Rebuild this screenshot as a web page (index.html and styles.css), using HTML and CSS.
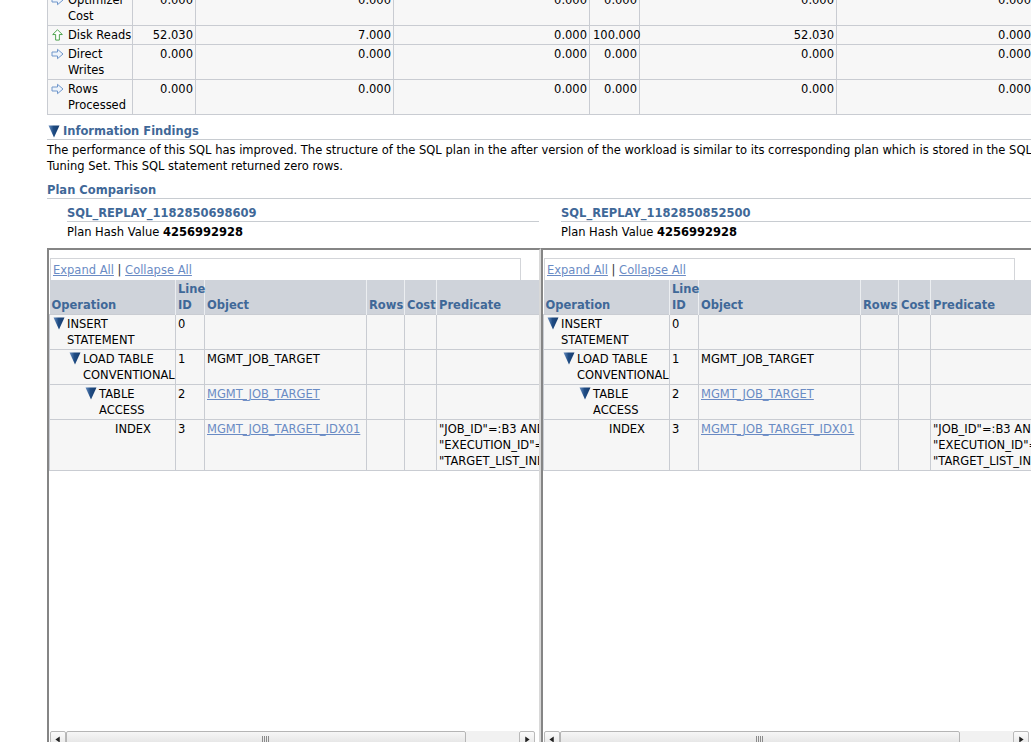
FILE: index.html
```html
<!DOCTYPE html>
<html lang="en">
    <head>
        <meta charset="UTF-8" />
        <title>SQL Performance Analyzer - Plan Comparison</title>
        <link rel="stylesheet" href="styles.css">
    </head>
    <body>
        <svg class="defs" width="0" height="0" aria-hidden="true">
            <defs>
                <linearGradient id="triFill" x1="0" y1="0" x2="1" y2="0">
                    <stop offset="0" stop-color="#6a8fc0" />
                    <stop offset="0.45" stop-color="#1f4c84" />
                    <stop offset="1" stop-color="#163b6c" />
                </linearGradient>
                <symbol id="tri" viewBox="0 0 12 13">
                    <path d="M0.5 0.5 H11.5 L6 12.5 Z" fill="url(#triFill)" />
                </symbol>
                <symbol id="arrowRight" viewBox="0 0 13 11">
                    <path d="M1 3.5 H6.5 V0.8 L12 5.5 L6.5 10.2 V7.5 H1 Z" fill="#eef4fb" stroke="#7097cb" stroke-width="1" />
                </symbol>
                <symbol id="arrowUp" viewBox="0 0 12 13">
                    <path d="M6 0.8 L11.2 6 H8 V12 H4 V6 H0.8 Z" fill="#fff" stroke="#3f9b3f" stroke-width="1" />
                </symbol>
            </defs>
        </svg>

        <div class="page">
            <table class="stats">
                <colgroup>
                    <col style="width: 85px" />
                    <col style="width: 63px" />
                    <col style="width: 198px" />
                    <col style="width: 196px" />
                    <col style="width: 50px" />
                    <col style="width: 197px" />
                    <col style="width: 197px" />
                </colgroup>
                <tr>
                    <td class="label"><div class="metric"><svg class="ico"><use href="#arrowRight" /></svg><span>Optimizer Cost</span></div></td>
                    <td class="num">0.000</td>
                    <td class="num">0.000</td>
                    <td class="num">0.000</td>
                    <td class="num">0.000</td>
                    <td class="num">0.000</td>
                    <td class="num">0.000</td>
                </tr>
                <tr>
                    <td class="label"><div class="metric"><svg class="ico"><use href="#arrowUp" /></svg><span class="nowrap">Disk Reads</span></div></td>
                    <td class="num">52.030</td>
                    <td class="num">7.000</td>
                    <td class="num">0.000</td>
                    <td class="num">100.000</td>
                    <td class="num">52.030</td>
                    <td class="num">0.000</td>
                </tr>
                <tr>
                    <td class="label"><div class="metric"><svg class="ico"><use href="#arrowRight" /></svg><span>Direct Writes</span></div></td>
                    <td class="num">0.000</td>
                    <td class="num">0.000</td>
                    <td class="num">0.000</td>
                    <td class="num">0.000</td>
                    <td class="num">0.000</td>
                    <td class="num">0.000</td>
                </tr>
                <tr>
                    <td class="label"><div class="metric"><svg class="ico"><use href="#arrowRight" /></svg><span>Rows Processed</span></div></td>
                    <td class="num">0.000</td>
                    <td class="num">0.000</td>
                    <td class="num">0.000</td>
                    <td class="num">0.000</td>
                    <td class="num">0.000</td>
                    <td class="num">0.000</td>
                </tr>
            </table>

            <h3 class="section"><svg class="tri"><use href="#tri" /></svg>Information Findings</h3>
            <p class="finding">
                The performance of this SQL has improved. The structure of the SQL plan in the after version of the workload is similar to its corresponding plan which is stored in the SQL Tuning Set. This SQL statement returned zero rows.
            </p>

            <h3 class="section">Plan Comparison</h3>

            <div class="plans">
                <div class="plan">
                    <div class="plan-head">
                        <div class="plan-title">SQL_REPLAY_1182850698609</div>
                        <div class="plan-hash">Plan Hash Value <b>4256992928</b></div>
                    </div>
                    <div class="plan-frame">
                        <div class="frame-body">
                            <div class="tree-tools"><a href="#">Expand All</a> | <a href="#">Collapse All</a></div>
                            <table class="plan-table">
                                <colgroup>
                                    <col style="width: 126px" />
                                    <col style="width: 29px" />
                                    <col style="width: 162px" />
                                    <col style="width: 38px" />
                                    <col style="width: 32px" />
                                    <col style="width: 170px" />
                                </colgroup>
                                <tr>
                                    <th>Operation</th>
                                    <th>Line ID</th>
                                    <th>Object</th>
                                    <th>Rows</th>
                                    <th>Cost</th>
                                    <th>Predicate</th>
                                </tr>
                                <tr>
                                    <td><div class="op lvl0"><svg class="tri"><use href="#tri" /></svg><span>INSERT STATEMENT</span></div></td>
                                    <td>0</td>
                                    <td></td>
                                    <td></td>
                                    <td></td>
                                    <td></td>
                                </tr>
                                <tr>
                                    <td><div class="op lvl1"><svg class="tri"><use href="#tri" /></svg><span>LOAD TABLE CONVENTIONAL</span></div></td>
                                    <td>1</td>
                                    <td>MGMT_JOB_TARGET</td>
                                    <td></td>
                                    <td></td>
                                    <td></td>
                                </tr>
                                <tr>
                                    <td><div class="op lvl2"><svg class="tri"><use href="#tri" /></svg><span>TABLE ACCESS</span></div></td>
                                    <td>2</td>
                                    <td><a href="#">MGMT_JOB_TARGET</a></td>
                                    <td></td>
                                    <td></td>
                                    <td></td>
                                </tr>
                                <tr>
                                    <td><div class="op lvl3"><span class="leaf"></span><span>INDEX</span></div></td>
                                    <td>3</td>
                                    <td><a href="#">MGMT_JOB_TARGET_IDX01</a></td>
                                    <td></td>
                                    <td></td>
                                    <td>"JOB_ID"=:B3 AND "EXECUTION_ID"=:B2 AND "TARGET_LIST_INDEX"=:B1</td>
                                </tr>
                            </table>
                        </div>
                        <div class="hscroll">
                            <span class="sb-btn"><svg viewBox="0 0 16 16"><path d="M5 8 L10 4.5 V11.5 Z" /></svg></span>
                            <span class="sb-thumb"><span class="grip"></span></span>
                            <span class="sb-track"></span>
                            <span class="sb-btn"><svg viewBox="0 0 16 16"><path d="M11 8 L6 4.5 V11.5 Z" /></svg></span>
                        </div>
                    </div>
                </div>

                <div class="plan">
                    <div class="plan-head">
                        <div class="plan-title">SQL_REPLAY_1182850852500</div>
                        <div class="plan-hash">Plan Hash Value <b>4256992928</b></div>
                    </div>
                    <div class="plan-frame">
                        <div class="frame-body">
                            <div class="tree-tools"><a href="#">Expand All</a> | <a href="#">Collapse All</a></div>
                            <table class="plan-table">
                                <colgroup>
                                    <col style="width: 126px" />
                                    <col style="width: 29px" />
                                    <col style="width: 162px" />
                                    <col style="width: 38px" />
                                    <col style="width: 32px" />
                                    <col style="width: 170px" />
                                </colgroup>
                                <tr>
                                    <th>Operation</th>
                                    <th>Line ID</th>
                                    <th>Object</th>
                                    <th>Rows</th>
                                    <th>Cost</th>
                                    <th>Predicate</th>
                                </tr>
                                <tr>
                                    <td><div class="op lvl0"><svg class="tri"><use href="#tri" /></svg><span>INSERT STATEMENT</span></div></td>
                                    <td>0</td>
                                    <td></td>
                                    <td></td>
                                    <td></td>
                                    <td></td>
                                </tr>
                                <tr>
                                    <td><div class="op lvl1"><svg class="tri"><use href="#tri" /></svg><span>LOAD TABLE CONVENTIONAL</span></div></td>
                                    <td>1</td>
                                    <td>MGMT_JOB_TARGET</td>
                                    <td></td>
                                    <td></td>
                                    <td></td>
                                </tr>
                                <tr>
                                    <td><div class="op lvl2"><svg class="tri"><use href="#tri" /></svg><span>TABLE ACCESS</span></div></td>
                                    <td>2</td>
                                    <td><a href="#">MGMT_JOB_TARGET</a></td>
                                    <td></td>
                                    <td></td>
                                    <td></td>
                                </tr>
                                <tr>
                                    <td><div class="op lvl3"><span class="leaf"></span><span>INDEX</span></div></td>
                                    <td>3</td>
                                    <td><a href="#">MGMT_JOB_TARGET_IDX01</a></td>
                                    <td></td>
                                    <td></td>
                                    <td>"JOB_ID"=:B3 AND "EXECUTION_ID"=:B2 AND "TARGET_LIST_INDEX"=:B1</td>
                                </tr>
                            </table>
                        </div>
                        <div class="hscroll">
                            <span class="sb-btn"><svg viewBox="0 0 16 16"><path d="M5 8 L10 4.5 V11.5 Z" /></svg></span>
                            <span class="sb-thumb"><span class="grip"></span></span>
                            <span class="sb-track"></span>
                            <span class="sb-btn"><svg viewBox="0 0 16 16"><path d="M11 8 L6 4.5 V11.5 Z" /></svg></span>
                        </div>
                    </div>
                </div>
            </div>
        </div>
    </body>
</html>
```

FILE: styles.css
```css
body {
    margin: 0;
    font-family: "DejaVu Sans", sans-serif;
    font-size: 11.5px;
    line-height: 16px;
    color: #000;
    background: #fff;
    overflow: hidden;
}
.defs {
    position: absolute;
    width: 0;
    height: 0;
}
.page {
    padding-left: 47px;
    width: 1000px;
}
a {
    color: #6a8bc4;
}
.nowrap {
    white-space: nowrap;
}

/* statistics table */
.stats {
    border-collapse: collapse;
    table-layout: fixed;
    width: 986px;
    margin-top: -10px;
}
.stats td {
    background: #f7f7f7;
    border: 1px solid #c9ccd2;
    padding: 1px 2px 1px 3px;
    vertical-align: top;
}
.stats .label {
    padding-right: 0;
}
.stats .num {
    text-align: right;
}
.metric {
    display: flex;
    align-items: flex-start;
}
.metric .ico {
    flex: none;
    width: 13px;
    height: 12px;
    margin: 2px 4px 0 0;
}

/* section headers */
.section {
    display: flex;
    align-items: center;
    margin: 8px 0 0;
    font-size: 11.5px;
    font-weight: bold;
    line-height: 16px;
    color: #3f6898;
    border-bottom: 1px solid #c8ccd1;
}
.section .tri {
    width: 12px;
    height: 13px;
    margin: 0 3px 0 1px;
}
.finding {
    margin: 2px 0 6px;
    width: 1000px;
}

/* plan comparison */
.plans {
    display: grid;
    grid-template-columns: 494px 494px;
}
.plan-head {
    padding: 0 2px 0 20px;
}
.plan-title {
    margin-top: 7px;
    font-weight: bold;
    line-height: 15px;
    color: #3f6898;
    border-bottom: 1px solid #c8ccd1;
}
.plan-hash {
    padding-top: 2px;
}
.plan-frame {
    margin-top: 8px;
    border-top: 2px solid #858585;
    border-left: 2px solid #858585;
    border-right: 2px solid #d8d8d8;
}
.frame-body {
    height: 481px;
    overflow: hidden;
    padding: 8px 0 0 0;
    box-sizing: border-box;
    background: #fff;
}
.tree-tools {
    width: 467px;
    height: 21px;
    line-height: 22px;
    margin-left: 1px;
    padding-left: 2px;
    border: 1px solid #d3d5d9;
    border-bottom: none;
    color: #333;
}
.plan-table {
    border-collapse: collapse;
    table-layout: fixed;
    width: 557px;
}
.plan-table th {
    background: #cfd3da;
    border-left: 1px solid #eceef1;
    padding: 1px 2px;
    text-align: left;
    vertical-align: bottom;
    color: #3f6898;
    font-weight: bold;
}
.plan-table th:first-child {
    border-left: none;
}
.plan-table td {
    background: #f6f6f6;
    border: 1px solid #c9ccd2;
    padding: 1px 2px;
    vertical-align: top;
    height: 32px;
}
.op {
    display: flex;
    align-items: flex-start;
}
.op .tri,
.op .leaf {
    flex: none;
    width: 12px;
    height: 13px;
    margin: 1px 2px 0 0;
}
.lvl0 { padding-left: 1px; }
.lvl1 { padding-left: 17px; }
.lvl2 { padding-left: 33px; }
.lvl3 { padding-left: 49px; }

/* horizontal scrollbar */
.hscroll {
    display: flex;
    height: 17px;
    padding-left: 1px;
}
.sb-btn {
    width: 14px;
    height: 15px;
    border: 1px solid #b9b9b9;
    border-radius: 2px;
    background: linear-gradient(#fbfbfb, #e4e4e4);
}
.sb-btn svg {
    width: 14px;
    height: 15px;
    fill: #222;
}
.sb-thumb {
    width: 398px;
    height: 15px;
    border: 1px solid #b5b5b5;
    border-radius: 2px;
    background: linear-gradient(#f6f6f6, #e0e0e0);
    display: flex;
    justify-content: center;
}
.grip {
    width: 8px;
    height: 6px;
    margin-top: 4px;
    background: repeating-linear-gradient(90deg, #8a8a8a 0 1px, transparent 1px 2px);
}
.sb-track {
    width: 53px;
    background: #f1f1f1;
}
```
